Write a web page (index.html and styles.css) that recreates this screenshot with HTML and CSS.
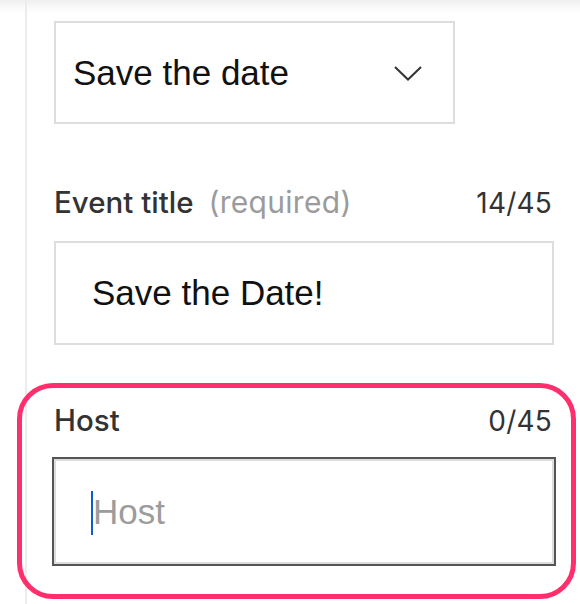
FILE: index.html
```html
<!DOCTYPE html>
<html lang="en">
<head>
<meta charset="utf-8">
<title>Event details</title>
<link rel="stylesheet" href="styles.css">
</head>
<body>
<div class="page">
  <div class="rail"></div>
  <main class="panel">
    <div class="select" role="combobox" aria-expanded="false">
      <span class="select-value">Save the date</span>
      <svg class="chevron" width="28" height="15" viewBox="0 0 28 15" aria-hidden="true">
        <polyline points="1,1 14,13.5 27,1" fill="none" stroke="#333" stroke-width="2"/>
      </svg>
    </div>

    <div class="field field-title">
      <div class="field-head">
        <label class="label">Event title<span class="hint">(required)</span></label>
        <span class="count">14/45</span>
      </div>
      <div class="input"><span class="value">Save the Date!</span></div>
    </div>

    <div class="highlight">
      <div class="field">
        <div class="field-head">
          <label class="label">Host</label>
          <span class="count">0/45</span>
        </div>
        <div class="input input-focus"><span class="caret"></span><span class="placeholder">Host</span></div>
      </div>
    </div>
  </main>
</div>
</body>
</html>
```

FILE: styles.css
```css
html, body {
  margin: 0;
  padding: 0;
}

body {
  background: linear-gradient(to bottom, #efefef 0, #fafafa 8px, #ffffff 14px);
  font-family: "Liberation Sans", Arial, sans-serif;
  color: #111;
}

.page {
  display: flex;
  min-height: 604px;
}

.rail {
  width: 25px;
  flex: none;
}

.panel {
  flex: 1;
  border-left: 2px solid #ececec;
  padding: 21px 26px 0 27px;
  display: flex;
  flex-direction: column;
}

.select {
  box-sizing: border-box;
  width: 401px;
  height: 103px;
  border: 2px solid #dddddd;
  padding: 0 31px 0 17px;
  display: flex;
  align-items: center;
  justify-content: space-between;
  margin-bottom: 61px;
}

.select-value {
  font-size: 35px;
  line-height: 40px;
  color: #111;
}

.chevron {
  display: block;
  margin-top: 2px;
}

.field-head {
  display: flex;
  justify-content: space-between;
  align-items: baseline;
  height: 34px;
  margin-bottom: 22px;
  font-family: "Inter", "Liberation Sans", sans-serif;
  font-size: 28px;
  line-height: 34px;
  color: #333;
}

.label {
  font-size: 29.5px;
  font-weight: 500;
}

.hint {
  font-size: 30px;
  font-weight: 400;
  color: #9b9b9b;
  margin-left: 15px;
  letter-spacing: 0.3px;
}

.count {
  font-weight: 400;
  margin-right: 2px;
  letter-spacing: 0.2px;
}

.input {
  box-sizing: border-box;
  height: 104px;
  border: 2px solid #dddddd;
  padding: 0 36px;
  display: flex;
  align-items: center;
  font-size: 35px;
  line-height: 40px;
}

.value {
  color: #111;
}

.field-title {
  margin-bottom: 38px;
}

.highlight {
  margin: 0 -22px 0 -37px;
  border: 5px solid #ff2f6e;
  border-radius: 36px;
  padding: 15px 17px 30px 32px;
}

.input-focus {
  height: 105px;
  outline: 2px solid #555555;
  padding-left: 35px;
}

.caret {
  display: inline-block;
  width: 2px;
  height: 44px;
  background: #0b5bd3;
  margin-top: 3px;
}

.placeholder {
  color: #9c9c9c;
}
```
